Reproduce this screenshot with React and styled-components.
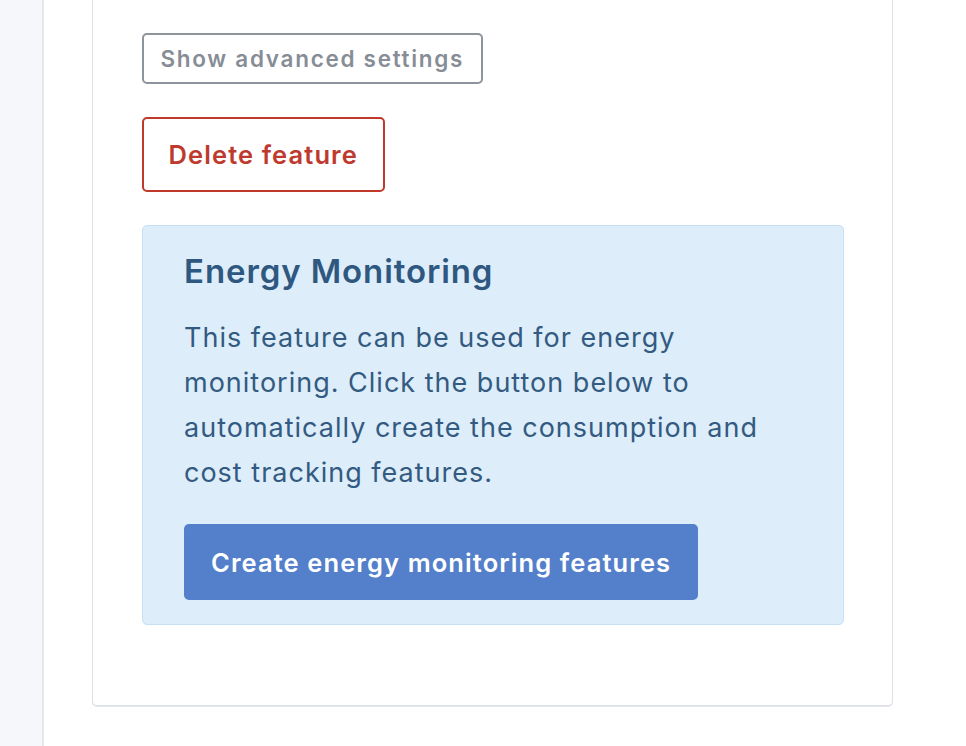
import React from "react";
import styled, { createGlobalStyle } from "styled-components";

const Global = createGlobalStyle`
  html, body { margin: 0; padding: 0; background: #ffffff; }
  body { font-family: Inter, "Noto Sans", "Liberation Sans", sans-serif; }
  * { box-sizing: border-box; }
`;

const Layout = styled.div`
  display: flex;
  height: 746px;
  overflow: hidden;
`;

const Sidebar = styled.aside`
  width: 44px;
  flex: none;
  background: #f5f7fb;
  border-right: 2px solid #e3e7ee;
`;

const Main = styled.main`
  flex: 1;
  display: flex;
  flex-direction: column;
  padding: 0 73px 0 48px;
`;

const Card = styled.section`
  background: #fff;
  border: 1.5px solid #dde1e6;
  border-top: none;
  border-radius: 0 0 5px 5px;
  box-shadow: 0 1px 0 #e4e8ed;
  padding: 33px 48px 80px 48.5px;
  display: flex;
  flex-direction: column;
  align-items: flex-start;
`;

const OutlineButton = styled.button`
  font-family: inherit;
  background: #fff;
  cursor: pointer;
  font-weight: 600;
  border-radius: 5px;
  border: 2px solid ${(p) => p.$color};
  color: ${(p) => p.$text};
  font-size: ${(p) => p.$size}px;
  height: ${(p) => p.$height}px;
  padding: 0 ${(p) => p.$pad}px;
  letter-spacing: ${(p) => p.$ls}px;
  margin-bottom: 33px;
`;

const InfoBox = styled.div`
  align-self: stretch;
  background: #ddedfa;
  border: 1.5px solid #c8e0f4;
  border-radius: 5px;
  padding: 25px 42px 24px 41.5px;
  color: #2f5880;
`;

const Title = styled.h3`
  margin: 0 0 24px;
  font-size: 33px;
  font-weight: 600;
  line-height: 40px;
  letter-spacing: 0.9px;
  color: #2f5880;
`;

const Text = styled.p`
  margin: 0 0 29px;
  font-size: 27px;
  line-height: 45px;
  font-weight: 400;
  letter-spacing: 1px;
  color: #335a80;
  max-width: 595px;
`;

const PrimaryButton = styled.button`
  font-family: inherit;
  border: none;
  border-radius: 5px;
  background: #5480cb;
  color: #fff;
  font-size: 25.5px;
  font-weight: 600;
  letter-spacing: 1.1px;
  height: 76px;
  padding: 0 27px;
  cursor: pointer;
`;

export default function App() {
  return (
    <>
      <Global />
      <Layout>
        <Sidebar />
        <Main>
          <Card>
            <OutlineButton $color="#8e949c" $text="#878d96" $size={22.5} $height={51} $pad={17} $ls={1.7}>
              Show advanced settings
            </OutlineButton>
            <OutlineButton $color="#c0392b" $text="#be3a2f" $size={25.5} $height={75} $pad={25} $ls={1.1}>
              Delete feature
            </OutlineButton>
            <InfoBox>
              <Title>Energy Monitoring</Title>
              <Text>
                This feature can be used for energy monitoring. Click the button below to
                automatically create the consumption and cost tracking features.
              </Text>
              <PrimaryButton>Create energy monitoring features</PrimaryButton>
            </InfoBox>
          </Card>
        </Main>
      </Layout>
    </>
  );
}
